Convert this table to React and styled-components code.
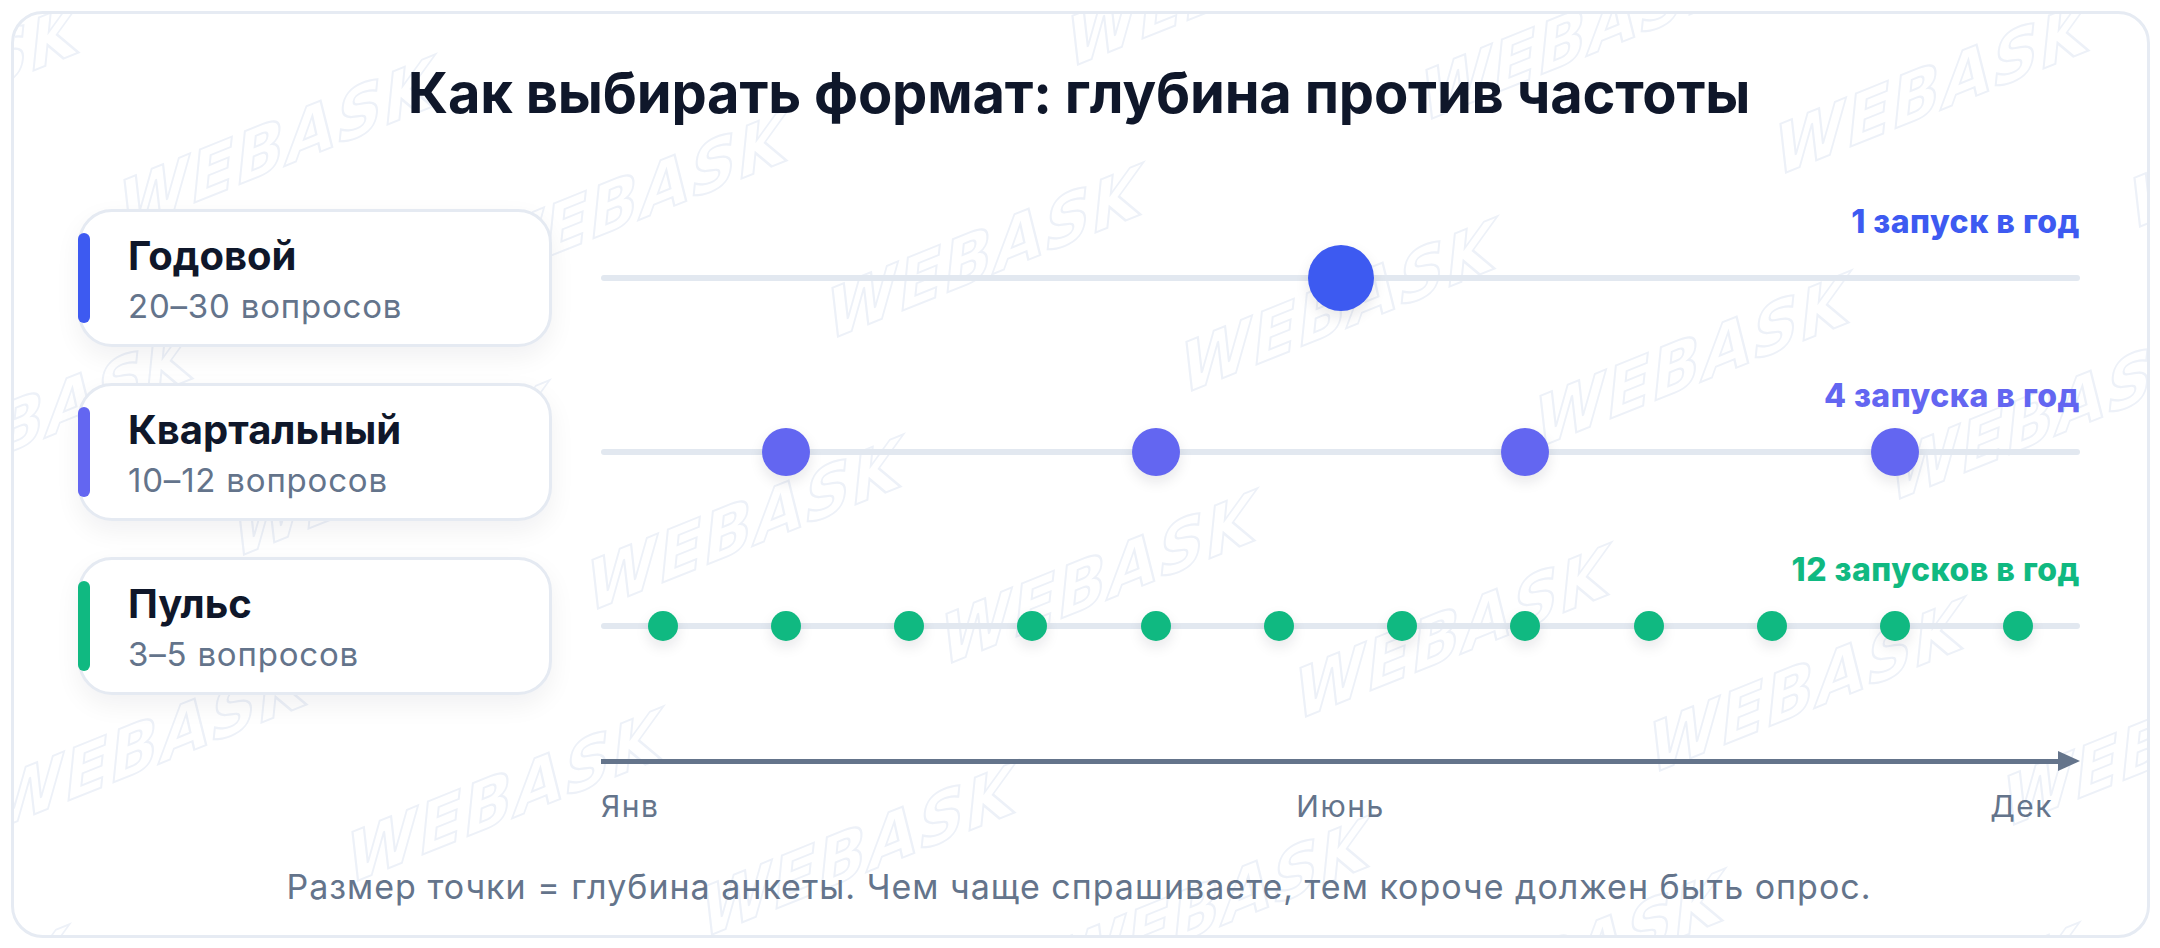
import React from "react";
import styled, { createGlobalStyle } from "styled-components";

// Base page styles
const GlobalStyle = createGlobalStyle`
  html, body {
    margin: 0;
    padding: 0;
    background: #ffffff;
  }
  body {
    font-family: "Inter", "Noto Sans", "Liberation Sans", sans-serif;
    color: #0f172a;
    -webkit-font-smoothing: antialiased;
  }
  * {
    box-sizing: border-box;
  }
`;

const Page = styled.div`
  height: 100vh;
  padding: 11px 10px 10px 11px;
`;

// Outer white card with a faint border
const Card = styled.section`
  position: relative;
  height: 100%;
  border: 3px solid #e6ebf3;
  border-radius: 32px;
  background: #ffffff;
  overflow: hidden;
`;

const Watermark = styled.svg`
  position: absolute;
  inset: 0;
  width: 100%;
  height: 100%;
  pointer-events: none;
  z-index: 0;
`;

const Content = styled.div`
  position: relative;
  z-index: 1;
  padding: 46px 67px 0 64px;
`;

const Title = styled.h1`
  margin: 0;
  font-size: 56px;
  line-height: 1.2;
  font-weight: 700;
  text-align: center;
  letter-spacing: -0.2px;
  color: #0f172a;
`;

const Rows = styled.div`
  display: flex;
  flex-direction: column;
  gap: 36px;
  margin-top: 82px;
`;

const Row = styled.div`
  display: grid;
  grid-template-columns: 474px 1fr;
  column-gap: 49px;
`;

// Format card on the left
const FormatCard = styled.div`
  position: relative;
  border: 3px solid #e5eaf2;
  border-radius: 34px;
  background: #ffffff;
  padding: 20px 24px 18px 47px;
  box-shadow: 0 10px 26px rgba(15, 23, 42, 0.06);

  &::before {
    content: "";
    position: absolute;
    left: -3px;
    top: 21px;
    bottom: 21px;
    width: 12px;
    border-radius: 6px;
    background: ${({ $color }) => $color};
  }
`;

const FormatName = styled.div`
  font-size: 40px;
  line-height: 48px;
  font-weight: 700;
  color: #0f172a;
`;

const FormatQuestions = styled.div`
  margin-top: 6px;
  font-size: 33px;
  line-height: 40px;
  font-weight: 400;
  letter-spacing: 0.8px;
  color: #64748b;
`;

// Timeline track on the right; its height follows the card beside it
const Track = styled.div`
  contain: size;
  display: grid;
  grid-template-rows: minmax(0, 1fr) auto minmax(0, 1fr);
`;

const Frequency = styled.div`
  align-self: end;
  justify-self: end;
  margin-bottom: 34px;
  font-size: 32px;
  line-height: 38px;
  font-weight: 800;
  letter-spacing: 0.5px;
  white-space: nowrap;
  color: ${({ $color }) => $color};
`;

const Line = styled.div`
  position: relative;
  height: 6px;
  border-radius: 3px;
  background: #e2e8f0;
`;

const Dot = styled.span`
  position: absolute;
  top: 50%;
  width: ${({ $size }) => $size}px;
  height: ${({ $size }) => $size}px;
  border-radius: 50%;
  background: ${({ $color }) => $color};
  transform: translate(-50%, -50%);
  box-shadow: 0 6px 14px rgba(15, 23, 42, 0.1);
`;

const AxisBlock = styled.div`
  margin: 56px 0 0 523px;
`;

const Axis = styled.div`
  height: 20px;
  display: flex;
  align-items: center;
`;

const AxisLine = styled.div`
  flex: 1;
  height: 5px;
  background: #64748b;
`;

const AxisHead = styled.div`
  width: 0;
  height: 0;
  border-top: 10px solid transparent;
  border-bottom: 10px solid transparent;
  border-left: 22px solid #64748b;
`;

const AxisLabels = styled.div`
  display: grid;
  grid-template-columns: 1fr auto 1fr;
  margin-top: 17px;
  font-size: 30px;
  line-height: 36px;
  letter-spacing: 1.5px;
  color: #64748b;
`;

const AxisLabel = styled.span`
  justify-self: ${({ $align }) => $align};
  margin-right: ${({ $align }) => ($align === "end" ? "27px" : "0")};
`;

const Footer = styled.p`
  margin: 42px 0 0;
  text-align: center;
  font-size: 34px;
  line-height: 41px;
  letter-spacing: 1px;
  color: #64748b;
`;

const months = (list) => list.map((m) => (m + 0.5) / 12);

const formats = [
  {
    name: "Годовой",
    questions: "20–30 вопросов",
    color: "#3d5af1",
    frequency: "1 запуск в год",
    size: 66,
    points: [0.5],
  },
  {
    name: "Квартальный",
    questions: "10–12 вопросов",
    color: "#6366f1",
    frequency: "4 запуска в год",
    size: 48,
    points: months([1, 4, 7, 10]),
  },
  {
    name: "Пульс",
    questions: "3–5 вопросов",
    color: "#10b981",
    frequency: "12 запусков в год",
    size: 30,
    points: months([0, 1, 2, 3, 4, 5, 6, 7, 8, 9, 10, 11]),
  },
];

// Tiled "WEBASK" watermark on a skewed lattice
const marks = [];
for (let i = -4; i < 8; i++) {
  for (let j = -2; j < 5; j++) {
    const x = 263 + i * 354 + j * 114;
    const y = 136 + i * 54 + j * 326;
    if (x > -200 && x < 2400 && y > -150 && y < 1100) marks.push({ x, y });
  }
}

const WatermarkLayer = () => (
  <Watermark>
    {marks.map(({ x, y }) => (
      <text
        key={`${x}-${y}`}
        x={0}
        y={0}
        transform={`translate(${x} ${y}) skewY(-22) skewX(-6)`}
        textAnchor="middle"
        dominantBaseline="middle"
        fontFamily='"DejaVu Sans Condensed", "DejaVu Sans", sans-serif'
        fontWeight="900"
        fontSize="70"
        letterSpacing="2"
        fill="none"
        stroke="#edf1f8"
        strokeWidth="2"
      >
        WEBASK
      </text>
    ))}
  </Watermark>
);

export default function App() {
  return (
    <Page>
      <GlobalStyle />
      <Card>
        <WatermarkLayer />
        <Content>
          <Title>Как выбирать формат: глубина против частоты</Title>
          <Rows>
            {formats.map((f) => (
              <Row key={f.name}>
                <FormatCard $color={f.color}>
                  <FormatName>{f.name}</FormatName>
                  <FormatQuestions>{f.questions}</FormatQuestions>
                </FormatCard>
                <Track>
                  <Frequency $color={f.color}>{f.frequency}</Frequency>
                  <Line>
                    {f.points.map((p) => (
                      <Dot
                        key={p}
                        $size={f.size}
                        $color={f.color}
                        style={{ left: `${p * 100}%` }}
                      />
                    ))}
                  </Line>
                  <div />
                </Track>
              </Row>
            ))}
          </Rows>
          <AxisBlock>
            <Axis>
              <AxisLine />
              <AxisHead />
            </Axis>
            <AxisLabels>
              <AxisLabel $align="start">Янв</AxisLabel>
              <AxisLabel $align="center">Июнь</AxisLabel>
              <AxisLabel $align="end">Дек</AxisLabel>
            </AxisLabels>
          </AxisBlock>
          <Footer>
            Размер точки = глубина анкеты. Чем чаще спрашиваете, тем короче
            должен быть опрос.
          </Footer>
        </Content>
      </Card>
    </Page>
  );
}
